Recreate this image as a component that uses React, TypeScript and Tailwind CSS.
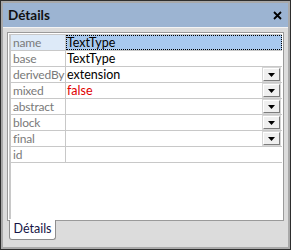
import React from 'react';

type Row = {
    label: string;
    value?: string;
    red?: boolean;
    dropdown?: boolean;
    selected?: boolean;
};

const rows: Row[] = [
    { label: 'name', value: 'TextType', selected: true },
    { label: 'base', value: 'TextType' },
    { label: 'derivedBy', value: 'extension', dropdown: true },
    { label: 'mixed', value: 'false', red: true, dropdown: true },
    { label: 'abstract', dropdown: true },
    { label: 'block', dropdown: true },
    { label: 'final', dropdown: true },
    { label: 'id' },
];

const DropButton = () => (
    <div className="flex h-[13px] w-[17px] items-center justify-center border border-t-[#ffffff] border-l-[#ffffff] border-r-[#7d7d7d] border-b-[#7d7d7d] bg-[#efefef] shadow-[0_0_0_1px_#d6d6d6]">
        <svg width="7" height="4" viewBox="0 0 7 4">
            <path d="M0 0h7L3.5 4z" fill="#000" />
        </svg>
    </div>
);

const App = () => {
    return (
        <div
            className="flex h-[250px] w-[291px] flex-col border border-[#2e2e2e] bg-[#a9a9a9] p-[2px]"
            style={{ fontFamily: 'Lato, "Noto Sans", sans-serif' }}
        >
            {/* title bar */}
            <div className="flex h-[24px] items-center justify-between bg-[#9cb4d2] pl-[5px] pr-[6px]">
                <span className="text-[13.5px] font-bold text-[#111]">Détails</span>
                <svg width="9" height="9" viewBox="0 0 9 9">
                    <path d="M1 1l7 7M8 1l-7 7" stroke="#000" strokeWidth="1.8" />
                </svg>
            </div>

            {/* body */}
            <div className="flex flex-1 flex-col border-t border-t-[#f4f4f4] bg-[#dcdcdc] px-[4px] pt-[4px]">
                <div className="flex h-[189px] flex-col border border-[#9a9a9a] bg-white p-[1px]">
                    <div className="flex flex-1 flex-col border-l-2 border-t border-[#c8c8c8]">
                        {rows.map((r) => (
                            <div key={r.label} className="flex h-[16px] border-b border-[#c8c8c8] text-[12.5px] leading-[15px]">
                                <div
                                    className={`w-[55px] shrink-0 whitespace-nowrap border-r border-[#c8c8c8] pl-[2px] text-[12px] tracking-[-0.2px] text-[#7a7a7a] ${r.selected ? 'bg-[#ddeaf8]' : ''}`}
                                >
                                    {r.label}
                                </div>
                                <div
                                    className={`flex flex-1 items-center justify-between pr-[2px] ${r.selected ? 'border border-dotted border-black bg-[#a8c9ef]' : 'pl-[1px]'}`}
                                >
                                    <span className={r.red ? 'text-[#e00000]' : 'text-black'}>{r.value ?? ''}</span>
                                    {r.dropdown && <DropButton />}
                                </div>
                            </div>
                        ))}
                        <div className="flex-1" />
                    </div>
                </div>

                {/* tab strip */}
                <div className="flex h-[24px] items-start pl-[2px]">
                    <div className="-mt-px flex h-[20px] w-[47px] items-center justify-center rounded-b-[3px] border border-t-0 border-[#8e8e8e] bg-white text-[12.5px] text-[#141446]">
                        Détails
                    </div>
                </div>
            </div>
        </div>
    );
};

export default App;
